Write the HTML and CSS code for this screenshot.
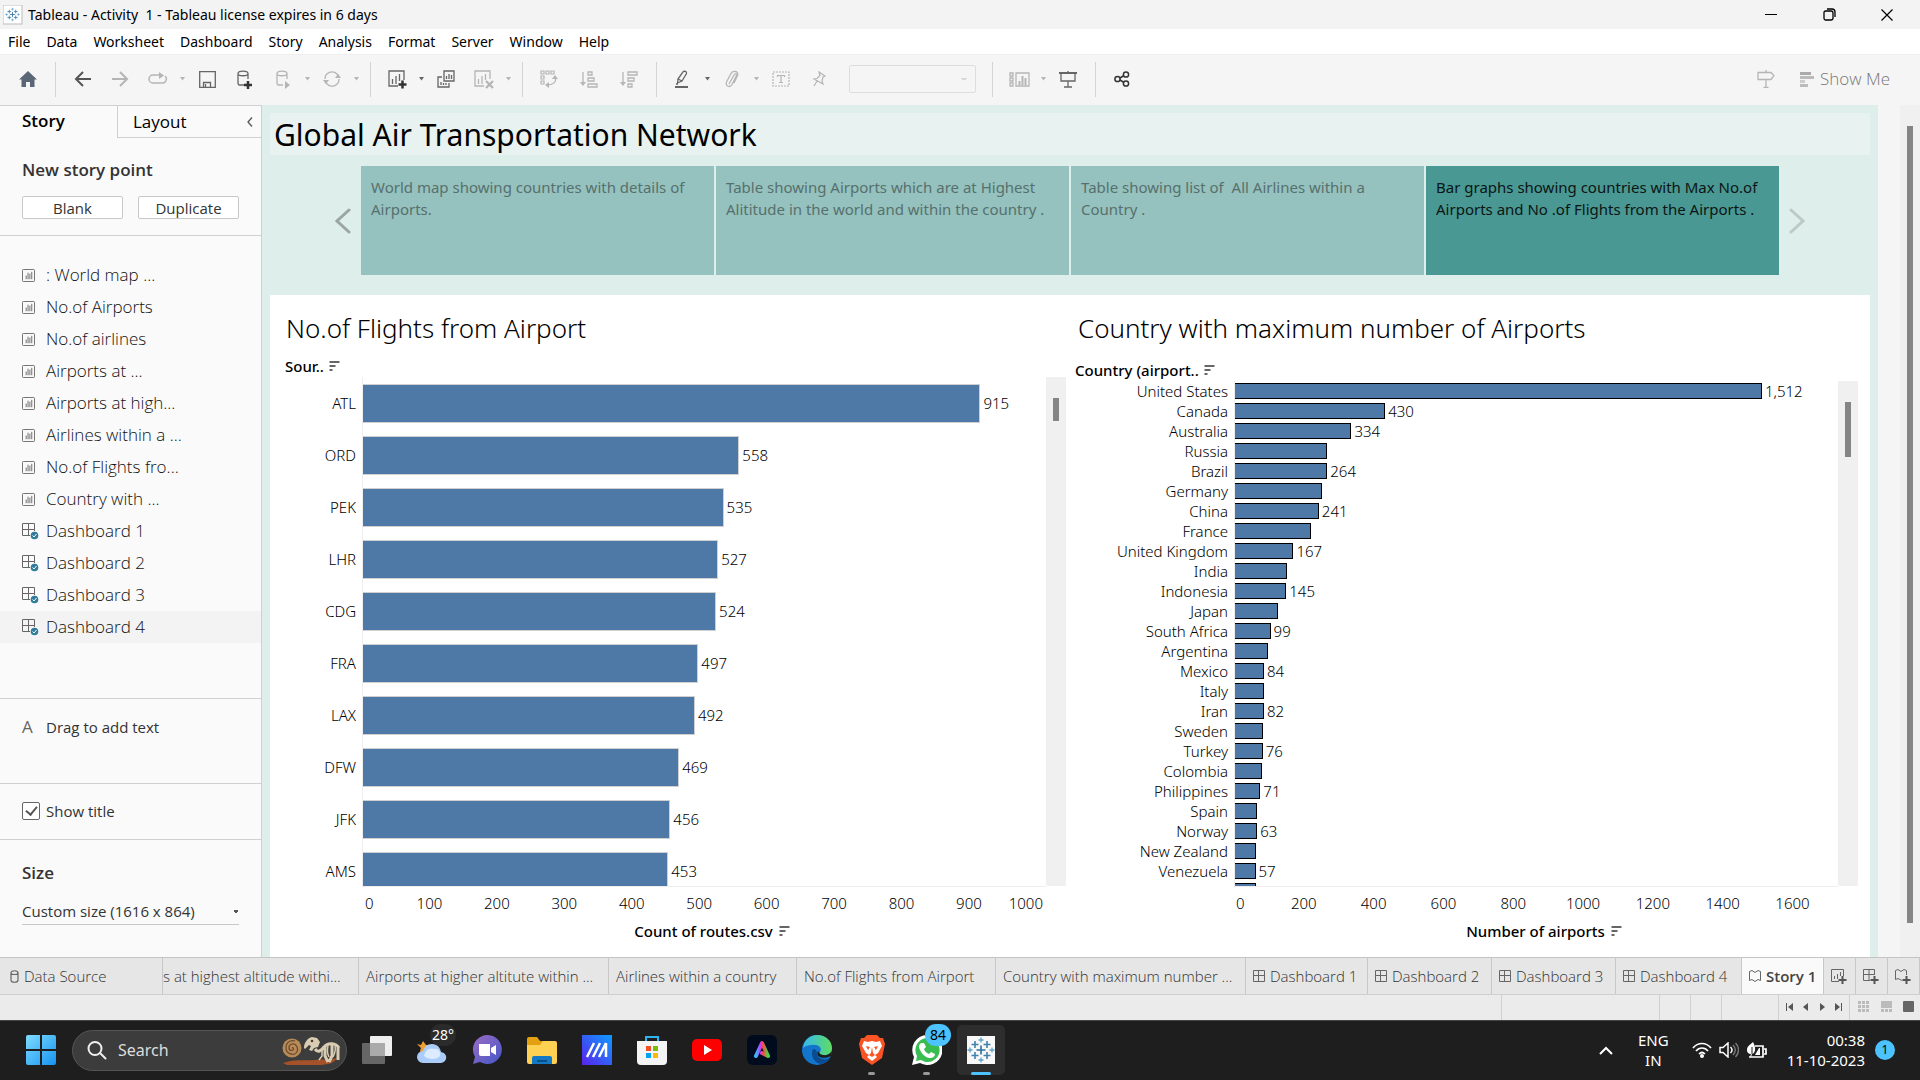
FILE: index.html
```html
<!DOCTYPE html>
<html lang="en">
<head>
<meta charset="utf-8">
<title>Tableau - Activity 1</title>
<meta name="viewport" content="width=device-width, initial-scale=1">
<link rel="stylesheet" href="styles.css">
</head>
<body>
<svg class="sprite" aria-hidden="true">
  <symbol id="tableau" viewBox="0 0 28 28"><g fill="none" stroke-width="1.6"><path stroke="#2f6f9f" d="M14 9.500v9M9.500 14h9"/><path stroke="#3f83ad" d="M8 5v7M4.500 8.500h7M20 5v7M16.500 8.500h7M8 16v7M4.500 19.500h7M20 16v7M16.500 19.500h7"/><path stroke="#5ea2c9" stroke-width="1.300" d="M14 1.500v5M11.500 4h5M14 21.500v5M11.500 24h5M3 11.500v5M.5 14h5M25 11.500v5M22.500 14h5"/></g></symbol>
  <symbol id="sheet" viewBox="0 0 14 14"><path fill="none" stroke="#666" d="M1.500.5h11a1 1 0 0 1 1 1v11a1 1 0 0 1-1 1h-11a1 1 0 0 1-1-1v-11a1 1 0 0 1 1-1zM4.500 7v4M6.500 4v7M8.500 5v6M10.500 3v8"/></symbol>
  <symbol id="dash" viewBox="0 0 17 17"><path fill="none" stroke="#666" d="M.5.5h12v12H.5zM6.500.5v12M.5 6.500h12"/><circle cx="12.500" cy="12.500" r="4.500" fill="#fafafa"/><circle cx="12.500" cy="12.500" r="3.800" fill="#2f7b9d"/><path fill="none" stroke="#fff" d="m10.500 12.500 1.500 1.500 2.500-3"/></symbol>
  <symbol id="grid" viewBox="0 0 12 12"><path fill="none" stroke="#666" d="M.5.5h11v11H.5zM5.500.5v11M.5 5.500h11"/></symbol>
  <symbol id="sort" viewBox="0 0 10 10"><path fill="#666" d="M0 0h10v2H0zM0 4h6v2H0zM0 8h3v2H0z"/></symbol>
  <symbol id="caret" viewBox="0 0 5 4"><path fill="currentColor" d="M0 0h5L2.500 3.500z"/></symbol>
</svg>
<div class="app">
  <header class="titlebar">
    <svg class="app-icon" viewBox="0 0 20 20"><rect width="19" height="19" fill="#fff" stroke="#bbb"/><use href="#tableau" x="2" y="2" width="15" height="15"/></svg>
    <span class="window-title">Tableau - Activity&nbsp; 1 - Tableau license expires in 6 days</span>
    <div class="window-controls">
      <button aria-label="Minimize"><svg width="12" height="12"><path stroke="#000" d="M0 5.500h12"/></svg></button>
      <button aria-label="Restore"><svg width="13" height="13"><path fill="none" stroke="#000" stroke-width="1.300" d="M2 3h6a2 2 0 0 1 2 2v5.500a2 2 0 0 1-2 1.500H2.500A1.800 1.800 0 0 1 1 10.500V4.500A1.500 1.500 0 0 1 2.500 3M4 1h5a3 3 0 0 1 3 3v5"/></svg></button>
      <button aria-label="Close"><svg width="12" height="12"><path stroke="#000" stroke-width="1.200" d="m.5.5 11 11M11.500.5l-11 11"/></svg></button>
    </div>
  </header>
  <nav class="menubar">
    <a href="#">File</a><a href="#">Data</a><a href="#">Worksheet</a><a href="#">Dashboard</a><a href="#">Story</a><a href="#">Analysis</a><a href="#">Format</a><a href="#">Server</a><a href="#">Window</a><a href="#">Help</a>
  </nav>
  <div class="toolbar">
    <button class="tool" aria-label="Home"><svg width="18" height="17"><path fill="#5b6776" d="M9 0 0 8.500h2.500V16H7v-5h4v5h4.500V8.500H18z"/></svg></button>
    <i class="sep"></i>
    <button class="tool" aria-label="Back"><svg width="17" height="16"><path fill="none" stroke="#555" stroke-width="2" d="M17 8H2M9 1 2 8l7 7"/></svg></button>
    <button class="tool off" aria-label="Forward"><svg width="17" height="16"><path fill="none" stroke="currentColor" stroke-width="2" d="M0 8h15M8 1l7 7-7 7"/></svg></button>
    <button class="tool off" aria-label="Replay"><svg width="20" height="14"><path fill="none" stroke="currentColor" stroke-width="1.500" d="M13 3H5a4 4 0 0 0 0 8h10a4 4 0 0 0 2-7"/><path fill="currentColor" d="m11 0 5 3.500-5 3.500z"/></svg></button>
    <button class="drop off" aria-label="Replay options"><svg class="caret"><use href="#caret"/></svg></button>
    <button class="tool" aria-label="Save"><svg width="17" height="17"><path fill="none" stroke="currentColor" stroke-width="1.300" d="M.7.700h15.600v15.600H.7zM4.500 16v-4.500h7V16M6.500 13v3"/></svg></button>
    <button class="tool" aria-label="New data source"><svg width="16" height="19"><path fill="none" stroke="currentColor" stroke-width="1.300" d="M7 15H2.500C1.500 15 1 14 1 13V3.500C1 .2 11 .2 11 3.500V9M1 3.500c0 3 10 3 10 0"/><path stroke="#333" stroke-width="2.500" d="M11 11v8M7 15h8"/></svg></button>
    <button class="tool off" aria-label="Pause updates"><svg width="14" height="19"><path fill="none" stroke="currentColor" stroke-width="1.300" d="M7 15H2.500C1.500 15 1 14 1 13V3.500C1 .2 11 .2 11 3.500V9M1 3.500c0 3 10 3 10 0"/><path fill="currentColor" d="m9 11 5 4-5 4z"/></svg></button>
    <button class="drop off" aria-label="Update options"><svg class="caret"><use href="#caret"/></svg></button>
    <button class="tool off" aria-label="Refresh"><svg width="18" height="16"><path fill="none" stroke="currentColor" stroke-width="1.300" d="M2 8a7 7 0 0 1 12-5l2 2M16 8a7 7 0 0 1-12 5l-2-2"/><path fill="currentColor" d="M12 7h6l-3-4zM0 9h6l-3 4z"/></svg></button>
    <button class="drop off" aria-label="Refresh options"><svg class="caret"><use href="#caret"/></svg></button>
    <i class="sep"></i>
    <button class="tool" aria-label="New worksheet"><svg width="19" height="19"><path fill="none" stroke="currentColor" stroke-width="1.300" d="M10 16H1V1h15v9M4.500 9v5M8 6v8M11.500 4v7"/><path stroke="#333" stroke-width="2.500" d="M14.500 10.500v8M10.500 14.500h8"/></svg></button>
    <button class="drop" aria-label="New options"><svg class="caret"><use href="#caret"/></svg></button>
    <button class="tool" aria-label="Duplicate sheet"><svg width="18" height="18"><path fill="none" stroke="currentColor" stroke-width="1.300" d="M7 1h10v10H7zM5 7H1v10h11v-4M9.500 6v3M12 4v5M14.500 5v4M4 12v3M6.500 13v2M9 13v2"/></svg></button>
    <button class="tool off" aria-label="Clear sheet"><svg width="20" height="19"><path fill="none" stroke="currentColor" stroke-width="1.300" d="M10 16H1V1h15v8M4.500 9v5M8 6v8M11.500 4v6"/><path stroke="currentColor" stroke-width="2.200" d="m12 11 7 7M19 11l-7 7"/></svg></button>
    <button class="drop off" aria-label="Clear options"><svg class="caret"><use href="#caret"/></svg></button>
    <i class="sep"></i>
    <div class="sort-tools">
      <button class="tool off" aria-label="Swap"><svg width="18" height="18"><path fill="none" stroke="currentColor" stroke-width="1.200" d="M1 1h3v3H1zM6 1h3v3H6zM11 1h3v3h-3zM1 6h3v3H1zM1 11h3v3H1zM15 7c2 5-2 8-8 8"/><path fill="currentColor" d="m12 9 3-4 3 4zM9 12v6l-4-3z"/></svg></button>
      <button class="tool off" aria-label="Sort ascending"><svg width="18" height="17"><path fill="none" stroke="currentColor" stroke-width="1.300" d="M3 1v13M8 1h4v3H8zM8 7h6v3H8zM8 13h9v3H8z"/><path fill="currentColor" d="M0 11h6l-3 4z"/></svg></button>
      <button class="tool off" aria-label="Sort descending"><svg width="18" height="17"><path fill="none" stroke="currentColor" stroke-width="1.300" d="M3 1v13M8 1h9v3H8zM8 7h6v3H8zM8 13h4v3H8z"/><path fill="currentColor" d="M0 11h6l-3 4z"/></svg></button>
    </div>
    <i class="sep"></i>
    <button class="tool" aria-label="Highlight"><svg width="16" height="18"><path fill="none" stroke="currentColor" stroke-width="1.300" d="m3 9 5-7c1-1.500 4-.5 3.500 1.500L7 11zM3 9l-.5 4L7 11M1 14h2"/><path fill="currentColor" d="M0 16h13v2H0z"/></svg></button>
    <button class="drop" aria-label="Highlight options"><svg class="caret"><use href="#caret"/></svg></button>
    <button class="tool off" aria-label="Group members"><svg width="14" height="18"><path fill="none" stroke="currentColor" stroke-width="1.300" d="m4 14 5-9c1-2 3-1 2.500.5L7 14.500C5 18 0 16.500 1.500 12L6 3.500C8 0 14 1 12.500 5.500L9 13"/></svg></button>
    <button class="drop off" aria-label="Group options"><svg class="caret"><use href="#caret"/></svg></button>
    <button class="tool off" aria-label="Show mark labels"><svg width="18" height="16"><path fill="none" stroke="currentColor" stroke-width="1.200" stroke-dasharray="2 1" d="M1 1h16v14H1z"/><path fill="none" stroke="currentColor" stroke-width="1.200" d="M5.500 6V4.500h7V6M9 4.500v7M7 11.500h4"/></svg></button>
    <button class="tool off" aria-label="Fix axes"><svg width="14" height="16"><path fill="none" stroke="currentColor" stroke-width="1.200" d="m7 1 6 4-2 1-1 4 1 3-9-5 3-.5 3-3zM5 10l-3 5"/></svg></button>
    <select class="fit" aria-label="Fit" disabled><option></option></select>
    <i class="sep"></i>
    <button class="tool off" aria-label="Show cards"><svg width="21" height="15"><path fill="none" stroke="currentColor" stroke-width="1.300" d="M1 1h3v3H1zM1 6h3v3H1zM1 11h3v3H1zM7 1h13v13H7z"/><path stroke="currentColor" stroke-width="2" d="M10.500 9v4M13.500 4v9M16.500 6v7"/></svg></button>
    <button class="drop off" aria-label="Card options"><svg class="caret"><use href="#caret"/></svg></button>
    <button class="tool" aria-label="Presentation mode"><svg width="18" height="17"><path fill="none" stroke="currentColor" stroke-width="1.300" d="M2 2v8h14V2M9 10v5.500M5 16h8M9 0v2"/><path fill="currentColor" d="M0 1h18v2H0z"/></svg></button>
    <i class="sep"></i>
    <button class="tool" aria-label="Share"><svg width="16" height="16"><g fill="none" stroke="#333" stroke-width="1.500"><circle cx="3.500" cy="8" r="2.600"/><circle cx="12" cy="3.500" r="2.600"/><circle cx="12" cy="12.500" r="2.600"/><path d="m6 7 4-2.500M6 9l4 2.500"/></g></svg></button>
    <div class="toolbar-end">
      <button class="tool off" aria-label="Guide"><svg width="18" height="18"><path fill="none" stroke="currentColor" stroke-width="1.300" d="M1 2.500h13l3 3-3 4H1zM9 0v2.500M9 9.500v8M6.500 17.400h5"/></svg></button>
      <button class="show-me"><svg width="14" height="15"><path fill="#aaa" d="M0 0h11v3H0z"/><path fill="#bbb" d="M0 4h14v3H0zM0 12h8v3H0z"/><path fill="#ccc" d="M0 8h5v3H0z"/></svg>Show Me</button>
    </div>
  </div>

  <div class="workspace">
    <aside class="sidebar">
      <div class="side-tabs">
        <button class="side-tab current">Story</button>
        <button class="side-tab">Layout<svg width="6" height="10"><path fill="none" stroke="#555" stroke-width="1.300" d="M5 .5 1 5l4 4.500"/></svg></button>
      </div>
      <section class="new-point">
        <h2>New story point</h2>
        <div class="point-buttons"><button>Blank</button><button>Duplicate</button></div>
      </section>
      <ul class="sheet-list">
        <li><svg class="s14"><use href="#sheet"/></svg>: World map ...</li>
        <li><svg class="s14"><use href="#sheet"/></svg>No.of Airports</li>
        <li><svg class="s14"><use href="#sheet"/></svg>No.of airlines</li>
        <li><svg class="s14"><use href="#sheet"/></svg>Airports at ...</li>
        <li><svg class="s14"><use href="#sheet"/></svg>Airports at high...</li>
        <li><svg class="s14"><use href="#sheet"/></svg>Airlines within a ...</li>
        <li><svg class="s14"><use href="#sheet"/></svg>No.of Flights fro...</li>
        <li><svg class="s14"><use href="#sheet"/></svg>Country with ...</li>
        <li><svg class="s17"><use href="#dash"/></svg>Dashboard 1</li>
        <li><svg class="s17"><use href="#dash"/></svg>Dashboard 2</li>
        <li><svg class="s17"><use href="#dash"/></svg>Dashboard 3</li>
        <li class="hovered"><svg class="s17"><use href="#dash"/></svg>Dashboard 4</li>
      </ul>
      <div class="drag-text"><span class="letter">A</span>Drag to add text</div>
      <label class="show-title"><input type="checkbox" checked>Show title</label>
      <section class="size">
        <h2><label for="size">Size</label></h2>
        <select id="size"><option>Custom size (1616 x 864)</option></select>
      </section>
    </aside>

    <main class="story">
      <h1>Global Air Transportation Network</h1>
      <div class="navigator">
        <button class="arrow" aria-label="Previous"><svg width="16" height="26"><path fill="none" stroke="#9ba5a2" stroke-width="3" stroke-linecap="round" d="M14 2 2 13l12 11"/></svg></button>
        <div class="points">
          <button class="point">World map showing countries with details of Airports.</button>
          <button class="point">Table showing Airports which are at Highest Alititude in the world and within the country .</button>
          <button class="point">Table showing list of&nbsp; All Airlines within a Country .</button>
          <button class="point active">Bar graphs showing countries with Max No.of Airports and No .of Flights from the Airports .</button>
        </div>
        <button class="arrow" aria-label="Next"><svg width="16" height="26"><path fill="none" stroke="#bccac7" stroke-width="3" stroke-linecap="round" d="m2 2 12 11L2 24"/></svg></button>
      </div>
      <div class="charts">
        <section class="chart flights">
          <h2>No.of Flights from Airport</h2>
          <div class="field">Sour..<svg class="sort"><use href="#sort"/></svg></div>
          <div class="plot">
            <div class="rows">
              <div class="row"><span class="name">ATL</span><div class="track"><i class="bar" style="width:90.4%"></i><span>915</span></div></div>
              <div class="row"><span class="name">ORD</span><div class="track"><i class="bar" style="width:55.1%"></i><span>558</span></div></div>
              <div class="row"><span class="name">PEK</span><div class="track"><i class="bar" style="width:52.8%"></i><span>535</span></div></div>
              <div class="row"><span class="name">LHR</span><div class="track"><i class="bar" style="width:52%"></i><span>527</span></div></div>
              <div class="row"><span class="name">CDG</span><div class="track"><i class="bar" style="width:51.7%"></i><span>524</span></div></div>
              <div class="row"><span class="name">FRA</span><div class="track"><i class="bar" style="width:49.1%"></i><span>497</span></div></div>
              <div class="row"><span class="name">LAX</span><div class="track"><i class="bar" style="width:48.6%"></i><span>492</span></div></div>
              <div class="row"><span class="name">DFW</span><div class="track"><i class="bar" style="width:46.3%"></i><span>469</span></div></div>
              <div class="row"><span class="name">JFK</span><div class="track"><i class="bar" style="width:45%"></i><span>456</span></div></div>
              <div class="row"><span class="name">AMS</span><div class="track"><i class="bar" style="width:44.700%"></i><span>453</span></div></div>
            </div>
            <div class="scroll"><i></i></div>
          </div>
          <div class="axis"><span>0</span><span>100</span><span>200</span><span>300</span><span>400</span><span>500</span><span>600</span><span>700</span><span>800</span><span>900</span><span>1000</span></div>
          <div class="axis-title">Count of routes.csv<svg class="sort"><use href="#sort"/></svg></div>
        </section>
        <section class="chart airports">
          <h2>Country with maximum number of Airports</h2>
          <div class="field">Country (airport..<svg class="sort"><use href="#sort"/></svg></div>
          <div class="plot">
            <div class="rows">
              <div class="row"><span class="name">United States</span><div class="track"><i class="bar" style="width:87.4%"></i><span>1,512</span></div></div>
              <div class="row"><span class="name">Canada</span><div class="track"><i class="bar" style="width:24.9%"></i><span>430</span></div></div>
              <div class="row"><span class="name">Australia</span><div class="track"><i class="bar" style="width:19.3%"></i><span>334</span></div></div>
              <div class="row"><span class="name">Russia</span><div class="track"><i class="bar" style="width:15.3%"></i></div></div>
              <div class="row"><span class="name">Brazil</span><div class="track"><i class="bar" style="width:15.3%"></i><span>264</span></div></div>
              <div class="row"><span class="name">Germany</span><div class="track"><i class="bar" style="width:14.4%"></i></div></div>
              <div class="row"><span class="name">China</span><div class="track"><i class="bar" style="width:13.9%"></i><span>241</span></div></div>
              <div class="row"><span class="name">France</span><div class="track"><i class="bar" style="width:12.6%"></i></div></div>
              <div class="row"><span class="name">United Kingdom</span><div class="track"><i class="bar" style="width:9.700%"></i><span>167</span></div></div>
              <div class="row"><span class="name">India</span><div class="track"><i class="bar" style="width:8.700%"></i></div></div>
              <div class="row"><span class="name">Indonesia</span><div class="track"><i class="bar" style="width:8.500%"></i><span>145</span></div></div>
              <div class="row"><span class="name">Japan</span><div class="track"><i class="bar" style="width:7.200%"></i></div></div>
              <div class="row"><span class="name">South Africa</span><div class="track"><i class="bar" style="width:5.900%"></i><span>99</span></div></div>
              <div class="row"><span class="name">Argentina</span><div class="track"><i class="bar" style="width:5.500%"></i></div></div>
              <div class="row"><span class="name">Mexico</span><div class="track"><i class="bar" style="width:4.800%"></i><span>84</span></div></div>
              <div class="row"><span class="name">Italy</span><div class="track"><i class="bar" style="width:4.800%"></i></div></div>
              <div class="row"><span class="name">Iran</span><div class="track"><i class="bar" style="width:4.800%"></i><span>82</span></div></div>
              <div class="row"><span class="name">Sweden</span><div class="track"><i class="bar" style="width:4.600%"></i></div></div>
              <div class="row"><span class="name">Turkey</span><div class="track"><i class="bar" style="width:4.600%"></i><span>76</span></div></div>
              <div class="row"><span class="name">Colombia</span><div class="track"><i class="bar" style="width:4.400%"></i></div></div>
              <div class="row"><span class="name">Philippines</span><div class="track"><i class="bar" style="width:4.200%"></i><span>71</span></div></div>
              <div class="row"><span class="name">Spain</span><div class="track"><i class="bar" style="width:3.700%"></i></div></div>
              <div class="row"><span class="name">Norway</span><div class="track"><i class="bar" style="width:3.700%"></i><span>63</span></div></div>
              <div class="row"><span class="name">New Zealand</span><div class="track"><i class="bar" style="width:3.500%"></i></div></div>
              <div class="row"><span class="name">Venezuela</span><div class="track"><i class="bar" style="width:3.400%"></i><span>57</span></div></div>
              <div class="row"><span class="name">Greenland</span><div class="track"><i class="bar" style="width:3.400%"></i></div></div>
            </div>
            <div class="scroll"><i></i></div>
          </div>
          <div class="axis"><span>0</span><span>200</span><span>400</span><span>600</span><span>800</span><span>1000</span><span>1200</span><span>1400</span><span>1600</span></div>
          <div class="axis-title">Number of airports<svg class="sort"><use href="#sort"/></svg></div>
        </section>
      </div>
    </main>
    <div class="page-scroll"><i></i></div>
  </div>

  <nav class="sheet-tabs">
    <a href="#" class="source"><svg width="9" height="13"><path fill="none" stroke="#666" stroke-width="1.200" d="M1 3c0-3 7-3 7 0v7c0 3-7 3-7 0zM1 3c0 2 7 2 7 0"/></svg>Data Source</a>
    <a href="#" class="cut">s at highest altitude withi...</a>
    <a href="#">Airports at higher altitute within ...</a>
    <a href="#">Airlines within a country</a>
    <a href="#">No.of Flights from Airport</a>
    <a href="#">Country with maximum number ...</a>
    <a href="#"><svg class="s12"><use href="#grid"/></svg>Dashboard 1</a>
    <a href="#"><svg class="s12"><use href="#grid"/></svg>Dashboard 2</a>
    <a href="#"><svg class="s12"><use href="#grid"/></svg>Dashboard 3</a>
    <a href="#"><svg class="s12"><use href="#grid"/></svg>Dashboard 4</a>
    <a href="#" class="open"><svg width="12" height="12"><path fill="none" stroke="#666" d="M.5 1.500 3 .5l3 2 3-2 2.500 1v9L9 9.500l-3 2-3-2-2.500 1z"/></svg>Story 1</a>
    <button aria-label="New worksheet"><svg width="16" height="15"><path fill="none" stroke="#666" d="M8 12.500H.5V.5h12V7M3.500 7v3M6.500 5v5M9.500 3v4"/><path stroke="#555" stroke-width="2" d="M11.500 7v8M7.500 11h8"/></svg></button>
    <button aria-label="New dashboard"><svg width="16" height="15"><path fill="none" stroke="#666" d="M7 11.500H.5V.5h11V6M6 .5v11M.5 5.500h11"/><path stroke="#555" stroke-width="2" d="M11.500 7v8M7.500 11h8"/></svg></button>
    <button aria-label="New story"><svg width="16" height="15"><path fill="none" stroke="#666" d="M7 11.500 3 9.500l-2.500 1v-9L3 .5l3 2 3-2 2.500 1V6"/><path stroke="#555" stroke-width="2" d="M11.500 7v8M7.500 11h8"/></svg></button>
  </nav>
  <div class="status">
    <i></i><i></i><i></i><i></i>
    <div class="pager">
      <button aria-label="First"><svg width="8" height="8"><path fill="#555" d="M0 0h1v8H0zM7 0v8L2 4z"/></svg></button>
      <button aria-label="Previous sheet"><svg width="8" height="8"><path fill="#555" d="M6 0v8L1 4z"/></svg></button>
      <button aria-label="Next sheet"><svg width="8" height="8"><path fill="#555" d="M2 0v8l5-4z"/></svg></button>
      <button aria-label="Last"><svg width="8" height="8"><path fill="#555" d="M7 0h1v8H7zM1 0v8l5-4z"/></svg></button>
    </div>
    <div class="views">
      <button aria-label="Sheet sorter"><svg width="11" height="11"><path fill="#bbb" d="M0 0h3v3H0zM4 0h3v3H4zM8 0h3v3H8zM0 4h3v3H0zM4 4h3v3H4zM8 4h3v3H8zM0 8h3v3H0zM4 8h3v3H4zM8 8h3v3H8z"/></svg></button>
      <button aria-label="Filmstrip"><svg width="11" height="11"><path fill="#bbb" d="M0 0h11v7H0zM0 8h3v3H0zM4 8h3v3H4zM8 8h3v3H8z"/></svg></button>
      <button aria-label="Tabs"><svg width="11" height="11"><rect width="11" height="11" rx="1" fill="#666"/></svg></button>
    </div>
  </div>

  <footer class="taskbar">
    <button class="start" aria-label="Start"><svg width="30" height="30"><defs><linearGradient id="w" x2="1" y2="1"><stop stop-color="#7fdcff"/><stop offset="1" stop-color="#1593f0"/></linearGradient></defs><path fill="url(#w)" d="M2 0h12v14H0V2a2 2 0 0 1 2-2zM16 0h12a2 2 0 0 1 2 2v12H16zM0 16h14v14H2a2 2 0 0 1-2-2zM16 16h14v12a2 2 0 0 1-2 2H16z"/></svg></button>
    <label class="search">
      <svg width="20" height="20"><path fill="none" stroke="#eee" stroke-width="2" stroke-linecap="round" d="M14.500 8.500a6.500 6.500 0 1 1-13 0 6.500 6.500 0 0 1 13 0zM13.500 13.500l5 5"/></svg>
      <input type="search" placeholder="Search" aria-label="Search">
      <svg width="60" height="30" viewBox="0 0 60 30"><path fill="#a5512a" d="M1 28c10-4 22-2 32-3s15 0 22-2c-3 5-8 7-20 7H5z"/><circle cx="10" cy="13" r="9.500" fill="#b88a58"/><path fill="none" stroke="#6a4a2c" stroke-width="1.200" d="M10 13c1.500-1.500 2.500 2.500-.5 2.500S5.500 10 10 9s7 5 4.500 8.500-10 1.500-10.500-4S8 4.500 13 6"/><path fill="#d8cdb2" d="M22 13c0-6 4-10 8-11l5 1 3 4-2 5-4 1-2 3-3-1 2-4-2-1-4 4z"/><path fill="none" stroke="#d8cdb2" stroke-width="3" d="M33 14c3 4 6 2 9-2 4-5 12-4 15 1M43 12v9l3 6M50 10v11l-3 6M56 12v13"/><path fill="none" stroke="#d8cdb2" stroke-width="1.500" d="M46 11c-1 4-1 7 1 11M53 11c1 4 0 7-2 11M40 14v7l-3 4"/><circle cx="30" cy="6" r="1.300" fill="#4c3d2b"/></svg>
    </label>
    <div class="pinned">
      <button aria-label="Task view"><svg width="30" height="30"><rect y="8" width="23" height="21" rx="1" fill="#666"/><rect x="8" y="1" width="22" height="20" rx="1" fill="#eee"/><path fill="#aaa" d="M8 8h15v13H8z"/></svg></button>
      <button aria-label="Weather"><svg width="32" height="32"><path fill="#f0a030" d="m1 10 4 1 2-4 3 4h4l-3 4 1 5H6l-2-3 1-3z"/><path fill="#a9cdf8" d="M7 29a6 6 0 0 1 0-12c1-4 4-7 9-7 6 0 8 4 9 8 7 1 7 10 0 11z"/><path fill="#dcebff" d="M8 22c1-6 6-9 10-7 5-1 7 4 6 7-3 4-12 4-16 0z"/></svg><span class="badge temp">28°</span></button>
      <button aria-label="Chat"><svg width="30" height="30"><defs><linearGradient id="c" x2="1" y2="1"><stop stop-color="#9c6bc4"/><stop offset="1" stop-color="#4258c8"/></linearGradient></defs><path fill="url(#c)" d="M15 0a14.500 14.500 0 1 1-7 27l-7 2 2-7A14.500 14.500 0 0 1 15 0z"/><path fill="#fff" d="M7 9h11v12H9a2 2 0 0 1-2-2zM19 13l5-3v10l-5-3z"/></svg></button>
      <button aria-label="File Explorer"><svg width="30" height="28"><path fill="#e3a112" d="M0 3a2 2 0 0 1 2-2h8l3 4h15v6H0z"/><path fill="#ffd152" d="M0 9h13l3-4h12a2 2 0 0 1 2 2v19a2 2 0 0 1-2 2H2a2 2 0 0 1-2-2z"/><path fill="#1479c4" d="M5 28v-6a2 2 0 0 1 2-2h16a2 2 0 0 1 2 2v6z"/><path fill="#0b4f87" d="M10 24h10v2H10z"/></svg></button>
      <button aria-label="MyASUS"><svg width="30" height="30"><defs><linearGradient id="m" x1="0" y1="1" x2="1" y2="0"><stop stop-color="#5a22ee"/><stop offset="1" stop-color="#0c9cff"/></linearGradient></defs><path fill="url(#m)" d="M0 0h30v30H0z"/><path stroke="#fff" stroke-width="2.500" d="m5 22 7-14M11 22l7-14M17 22l7-14M24 8v14"/></svg></button>
      <button aria-label="Microsoft Store"><svg width="30" height="30"><path fill="none" stroke="#2eb5ef" stroke-width="2" d="M9 8V2h12v6"/><path fill="#f4f4f4" d="M0 6h30v20a4 4 0 0 1-4 4H4a4 4 0 0 1-4-4z"/><path fill="#f25022" d="M9 11h5v5H9z"/><path fill="#7fba00" d="M16 11h5v5h-5z"/><path fill="#00a4ef" d="M9 18h5v5H9z"/><path fill="#ffb900" d="M16 18h5v5h-5z"/></svg></button>
      <button aria-label="YouTube"><svg width="30" height="22"><rect width="30" height="22" rx="5" fill="#f00"/><path fill="#fff" d="m12 6 8 5-8 5z"/></svg></button>
      <button aria-label="Adobe Express"><svg width="30" height="30"><defs><linearGradient id="a"><stop stop-color="#39b8ff"/><stop offset=".35" stop-color="#c13cff"/><stop offset=".6" stop-color="#ff4b3a"/><stop offset="1" stop-color="#43d54b"/></linearGradient></defs><rect width="30" height="30" rx="6" fill="#000b1d"/><path fill="none" stroke="url(#a)" stroke-width="4" stroke-linecap="round" stroke-linejoin="round" d="m9 21 6-13 6 13-6-3"/></svg></button>
      <button aria-label="Edge"><svg width="30" height="30"><defs><linearGradient id="e"><stop stop-color="#35b9ee"/><stop offset="1" stop-color="#5fdd62"/></linearGradient></defs><circle cx="15" cy="15" r="15" fill="#1376cc"/><path fill="url(#e)" d="M1 13C2 5 8 0 15 0c9 0 15 6 15 13 0 6-5 8-10 7-2 0-3-2-2-3 3-4-2-8-8-7-4 0-7 1-9 3z"/><path fill="#0b4b91" d="M11 14c-3 6 1 15 9 15 4-1 7-3 8-6-5 3-12 1-13-4 0-3-1-5-4-5z"/><path fill="#1e1e1e" d="M16 16c-3 6 5 9 13 5l1-5c-4 6-10 4-12 3z"/></svg></button>
      <button class="running" aria-label="Brave"><svg width="26" height="30"><path fill="#fb5424" d="M8 0h10l3 3h3l2 6-3 14-10 7-10-7L0 9l2-6h3z"/><path fill="#fff" d="m5 6 4 1 4-1 4 1 4-1 2 5-4 7-3 2 2 2-5 4-5-4 2-2-3-2-4-7z"/><path fill="#fb5424" d="m7 11 4 1-2 3zM19 11l-4 1 2 3zM13 12l1 6 2 2-3 2-3-2 2-2z"/></svg></button>
      <button class="running" aria-label="WhatsApp"><svg width="30" height="30"><path fill="#fff" d="M15 0a15 15 0 1 1-7 28l-8 2 2-8A15 15 0 0 1 15 0z"/><path fill="#39bd51" d="M15 3a12 12 0 1 1-6 22l-5 1 1-5A12 12 0 0 1 15 3z"/><path fill="#fff" d="M10 8h2l2 4-2 2c1 3 3 4 5 5l2-2 4 2c0 3-3 4-5 4-5 0-10-6-11-11 0-2 1-4 3-4z"/></svg><span class="badge count">84</span></button>
      <button class="focused" aria-label="Tableau"><svg width="28" height="28"><path fill="#f8f8f8" d="M0 0h28v28H0z"/><use href="#tableau" width="28" height="28"/></svg></button>
    </div>
    <div class="tray">
      <button aria-label="Hidden icons"><svg width="14" height="9"><path fill="none" stroke="#fff" stroke-width="2" d="m1 8 6-6 6 6"/></svg></button>
      <button class="lang">ENG<br>IN</button>
      <button class="system" aria-label="Network, sound and battery">
        <svg width="20" height="16"><path fill="none" stroke="#fff" stroke-width="1.700" d="M1 6c5-6 13-6 18 0M4 9c3-4 9-4 12 0M7 12c2-2 4-2 6 0"/><circle cx="10" cy="14" r="2" fill="#fff"/></svg>
        <svg width="20" height="16"><path fill="none" stroke="#fff" stroke-width="1.500" d="M1 5.500h3L9 1v14l-5-4.500H1zM11.500 5c2 2 2 4 0 6"/><path fill="none" stroke="#777" stroke-width="1.500" d="M14 3c3 3 3 7 0 10M16.500 1c4 4 4 10 0 14"/></svg>
        <svg width="21" height="17"><path fill="none" stroke="#fff" stroke-width="1.700" d="M9 4h8v11H3M18 7h2v5h-2"/><path fill="#fff" d="M7 0c-3 3-6 4-6 8 0 2 1 4 4 4l-1 3h1l1-3c4-1 4-7 1-12z"/><path stroke="#1e1e1e" d="M6 5v7"/><path fill="#fff" d="m13 6-4 7h5v-7z"/></svg>
      </button>
      <button class="clock">00:38<br>11-10-2023</button>
      <button class="notice" aria-label="1 notification">1</button>
    </div>
  </footer>
</div>
</body>
</html>
```
FILE: styles.css
```css
* { box-sizing: border-box; }
body { margin: 0; color: #333; font: 15px/20px "Open Sans", "Noto Sans", sans-serif; }
button, input, select { font: inherit; color: inherit; margin: 0; }
button { border: 0; padding: 0; background: none; }
a { color: inherit; text-decoration: none; }
h1, h2 { margin: 0; }
svg { display: block; flex: none; }
.sprite { position: absolute; width: 0; height: 0; }
.s12 { width: 12px; height: 12px; }
.s14 { width: 13px; height: 13px; }
.s17 { width: 17px; height: 17px; }
.app { display: flex; flex-direction: column; height: 100vh; min-height: 720px; }

.titlebar { display: flex; align-items: center; flex: none; height: 29px; padding-left: 3px; background: #f3f3f3; color: #000; font-family: "Noto Sans", sans-serif; font-size: 14px; }
.app-icon { width: 20px; height: 20px; margin-right: 5px; }
.window-controls { display: flex; margin-left: auto; padding-right: 4px; }
.window-controls button { display: grid; place-items: center; width: 58px; height: 29px; }
.menubar { display: flex; gap: 16px; align-items: center; flex: none; height: 25px; padding-left: 8px; color: #000; font-family: "Noto Sans", sans-serif; font-size: 14px; }

.toolbar { display: flex; align-items: center; flex: none; height: 51px; padding: 0 0 2px 9px; background: #f5f5f5; border-top: 1px solid #eee; color: #666; }
.tool { display: grid; place-items: center; flex: none; width: 38px; height: 38px; }
.drop { display: grid; place-items: center; flex: none; width: 11px; height: 38px; }
.off { color: #b5b5b5; }
.caret { width: 5px; height: 4px; }
.sep { flex: none; width: 1px; height: 35px; margin: 0 7px 0 8px; background: #d4d4d4; }
.sort-tools { display: flex; gap: 2px; }
.fit { appearance: none; width: 127px; height: 28px; margin: 0 8px 0 11px; border: 1px solid #d4d4d4; border-radius: 2px; background: linear-gradient(45deg, transparent 50%, #ccc 50%) no-repeat 111px 12px / 3px 3px, linear-gradient(-45deg, transparent 50%, #ccc 50%) no-repeat 114px 12px / 3px 3px, #f5f5f5; }
.toolbar-end { display: flex; align-items: center; gap: 15px; margin-left: auto; padding-right: 30px; }
.show-me { display: flex; align-items: center; gap: 6px; color: #777; font-size: 17px; font-weight: 300; }

.workspace { display: flex; flex: 1; min-height: 0; }
.sidebar { display: flex; flex-direction: column; flex: none; width: 262px; border-top: 1px solid #d0d0d0; border-right: 1px solid #d0d0d0; background: #fafafa; overflow: hidden; }
.side-tabs { display: flex; flex: none; height: 32px; color: #000; font-size: 17px; }
.side-tab { flex: none; width: 117px; padding: 0 0 2px 22px; text-align: left; }
.side-tab.current { font-weight: 600; }
.side-tab:last-child { display: flex; flex: 1; align-items: center; justify-content: space-between; padding: 0 8px 0 15px; border-left: 1px solid #d0d0d0; border-bottom: 1px solid #d0d0d0; }
.new-point { flex: none; height: 98px; padding: 22px 22px 0; border-bottom: 1px solid #d0d0d0; }
.sidebar h2 { font-size: 17px; font-weight: 600; line-height: 20px; }
.point-buttons { display: flex; gap: 15px; margin-top: 16px; }
.point-buttons button { flex: 1; height: 23px; border: 1px solid #c8c8c8; border-radius: 2px; background: #fff; font-size: 15px; line-height: 20px; }
.sheet-list { flex: 1; margin: 0; padding: 23px 0 0; list-style: none; overflow: hidden; border-bottom: 1px solid #d0d0d0; font-size: 17px; font-weight: 300; color: #111; }
.sheet-list li { display: flex; align-items: center; height: 32px; padding-left: 22px; }
.sheet-list svg { margin-right: 11px; }
.sheet-list .s17 { margin-right: 7px; }
.sheet-list .hovered { background: #f3f3f3; }
.drag-text { display: flex; flex: none; height: 85px; padding: 18px 22px; border-bottom: 1px solid #d0d0d0; }
.letter { width: 24px; color: #666; font-size: 17px; }
.show-title { display: flex; align-items: center; gap: 6px; flex: none; height: 56px; padding: 0 0 2px 22px; border-bottom: 1px solid #d0d0d0; }
.show-title input { appearance: none; width: 18px; height: 18px; border: 1px solid #666; border-radius: 2px; display: grid; place-items: center; background: #fff; }
.show-title input::before { content: ""; width: 9px; height: 5px; margin-bottom: 3px; border-left: 2px solid #555; border-bottom: 2px solid #555; transform: rotate(-50deg); }
.size { flex: none; height: 117px; padding: 23px 22px 0; }
.size select { appearance: none; width: 100%; height: 26px; margin-top: 16px; padding: 0 0 2px; border: 0; border-bottom: 1px solid #c8c8c8; background: linear-gradient(45deg, transparent 50%, #555 50%) no-repeat right 3px top 11px / 3px 3px, linear-gradient(-45deg, transparent 50%, #555 50%) no-repeat right 0 top 11px / 3px 3px; }

.story { display: flex; flex-direction: column; flex: 1; min-width: 0; padding: 8px 8px 0; background: #deeeea; font-weight: 400; }
.story h1 { flex: none; height: 42px; padding-left: 4px; background: #e8f3f1; color: #000; font: 400 30px/44px "Noto Sans", sans-serif; }
.navigator { display: flex; flex: none; margin: 11px 55px 20px; height: 109px; }
.arrow { display: grid; place-items: center; flex: none; width: 36px; }
.points { display: grid; grid-template-columns: repeat(4, 1fr); gap: 2px; flex: 1; }
.point { display: flex; padding: 10px; background: #95c2be; color: #57706d; font-family: "Noto Sans", sans-serif; font-size: 15px; line-height: 22px; text-align: left; }
.point.active { background: #499893; color: #0c1514; }
.charts { display: grid; grid-template-columns: 1fr 1fr; flex: 1; min-height: 0; background: #fff; font-family: "Noto Sans", sans-serif; }
.chart { display: flex; flex-direction: column; min-width: 0; min-height: 0; padding: 15px 0 16px; }
.chart h2 { flex: none; margin-bottom: 10px; color: #000; font-size: 26px; font-weight: 300; line-height: 36px; }
.field { display: flex; align-items: center; gap: 5px; flex: none; height: 21px; padding-bottom: 1px; color: #000; font-weight: 500; }
.sort { width: 11px; height: 10px; }
.flights { --label: 92px; padding-right: 4px; }
.airports { --label: 164px; padding-right: 12px; }
.flights h2 { padding-left: 16px; }
.flights .field { padding-left: 15px; }
.airports h2 { margin-bottom: 14px; padding-left: 8px; }
.airports .field { padding-left: 5px; }
.plot { display: flex; flex: 1 1 0; min-height: 0; }
.rows { flex: 1; min-width: 0; overflow: hidden; color: #000; font-weight: 300; }
.row { display: flex; align-items: center; height: 52px; }
.name { flex: none; width: var(--label); padding-right: 6px; text-align: right; white-space: nowrap; }
.track { display: flex; align-items: center; flex: 1; min-width: 0; height: 100%; gap: 3px; border-left: 1px solid #eee; }
.bar { flex: none; height: 39px; background: #4e79a7; border: 1px solid #d0d0d0; border-left: 0; }
.airports .row { height: 20px; }
.airports .bar { height: 16px; border-color: #000; }
.scroll { display: flex; justify-content: center; flex: none; width: 20px; padding-top: 21px; background: #f0f0f0; }
.scroll i { width: 6px; height: 23px; background: #858585; }
.airports .scroll i { height: 55px; }
.axis { display: flex; flex: none; height: 28px; margin: 0 20px 0 var(--label); padding-top: 7px; background: linear-gradient(#eee, #eee) no-repeat top / 100% 1px; font-weight: 300; color: #000; }
.axis span { flex: none; width: 9.86%; text-align: center; }
.axis span:first-child { width: 4.93%; padding-left: 3px; text-align: left; }
.flights .axis span:last-child { flex: 1; padding-right: 3px; text-align: right; }
.airports .axis span { width: 11.56%; }
.airports .axis span:first-child { width: 5.78%; padding-left: 2px; }
.axis-title { display: flex; align-items: center; justify-content: center; gap: 6px; flex: none; height: 20px; margin: 7px 4px 0 var(--label); color: #000; font-weight: 500; }
.page-scroll { flex: none; display: flex; justify-content: center; width: 42px; padding: 21px 0 34px; border-left: 22px solid #f5f5f5; background: #f0f0f0; }
.page-scroll i { width: 6px; background: #858585; }

.sheet-tabs { display: grid; grid-template-columns: 163fr 196fr 250fr 188fr 199fr 250fr 122fr 124fr 124fr 126fr 82fr 32fr 32fr 32fr; flex: none; height: 38px; border-top: 1px solid #c4c4c4; border-bottom: 1px solid #d0d0d0; background: #e6e6e6; color: #333; font-weight: 300; }
.sheet-tabs > * { display: flex; align-items: center; gap: 5px; min-width: 0; padding-left: 7px; border-right: 1px solid #c8c8c8; white-space: nowrap; overflow: hidden; }
.sheet-tabs .source { padding-left: 10px; }
.sheet-tabs .cut { padding-left: 0; }
.sheet-tabs .open { background: #fafafa; color: #444; font-weight: 600; }
.status { display: flex; justify-content: flex-end; flex: none; height: 25px; background: #ebebeb; }
.status > * { width: 31px; border-left: 1px solid #d0d0d0; }
.status > :first-child { width: 158px; }
.status > :nth-child(4) { width: 57px; }
.status .pager, .status .views { display: flex; align-items: center; justify-content: space-between; width: 71px; padding: 0 7px 2px; }
.status .views { padding: 0 6px 2px 8px; }

.taskbar { display: flex; align-items: center; flex: none; height: 60px; padding: 0 0 1px 26px; border-top: 1px solid #444; background: #1e1e1e; color: #fff; }
.start { margin-right: 16px; }
.search { display: flex; align-items: center; width: 275px; height: 41px; padding: 0 4px 0 14px; border: 1px solid #555; border-radius: 21px; background: #3c3c3c; }
.search input { flex: 1; min-width: 0; margin-left: 11px; padding: 0; border: 0; background: none; font: 16px "Noto Sans", sans-serif; }
.search input::placeholder { color: #ddd; opacity: 1; }
.pinned { display: flex; margin-left: 2px; }
.pinned button { position: relative; display: grid; place-items: center; width: 55px; height: 50px; }
.badge { position: absolute; top: -1px; right: 3px; width: 26px; height: 22px; border-radius: 11px; font: 14px/22px "Noto Sans", sans-serif; }
.temp { background: #2b2b2b; }
.count { background: #4cc2ff; color: #000; }
.running::after, .focused::after { content: ""; position: absolute; bottom: 0; width: 7px; height: 3px; border-radius: 2px; background: #999; }
.pinned .focused { width: 48px; margin-left: 3px; border-radius: 5px; background: #2d2d2d; }
.focused::after { width: 20px; background: #4cc2ff; }
.tray { display: flex; align-items: center; margin-left: auto; padding-right: 25px; font-family: "Noto Sans", sans-serif; font-size: 15px; }
.lang { margin: 0 23px 0 25px; }
.system { display: flex; gap: 7px; margin-right: 20px; }
.clock { text-align: right; margin-right: 10px; }
.notice { width: 20px; height: 20px; border-radius: 50%; background: #4cc2ff; color: #000; font-size: 12px; }
```
